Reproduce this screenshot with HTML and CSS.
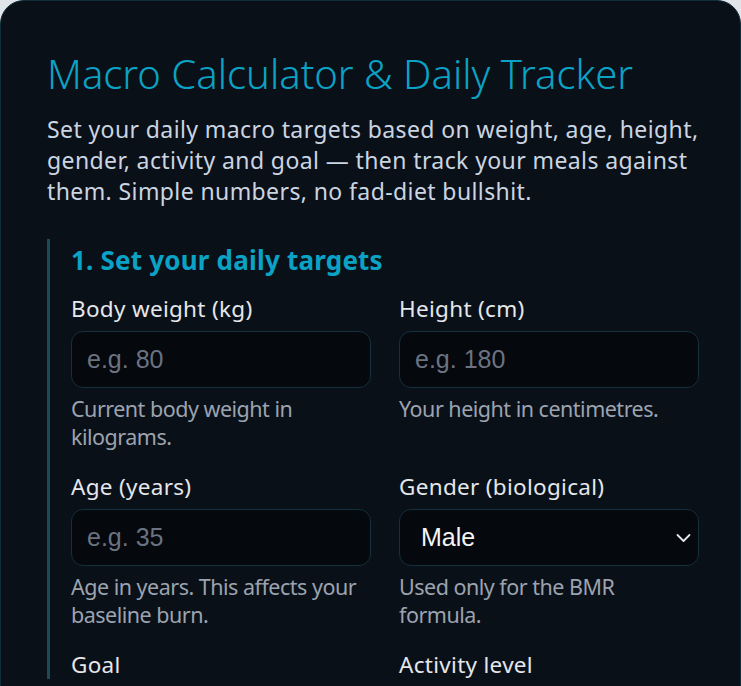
FILE: index.html
```html
<!DOCTYPE html>
<html lang="en">
<head>
<meta charset="utf-8">
<title>Macro Calculator &amp; Daily Tracker</title>
<link rel="stylesheet" href="styles.css">
</head>
<body>
<main class="card">
  <h1 class="title">Macro Calculator &amp; Daily Tracker</h1>
  <p class="intro">Set your daily macro targets based on weight, age, height, gender, activity and goal — then track your meals against them. Simple numbers, no fad-diet bullshit.</p>
  <section class="section">
    <h2 class="section-title">1. Set your daily targets</h2>
    <div class="grid">
      <div class="field">
        <label class="label" for="w">Body weight (kg)</label>
        <input class="input" id="w" type="text" placeholder="e.g. 80">
        <p class="help">Current body weight in kilograms.</p>
      </div>
      <div class="field">
        <label class="label" for="h">Height (cm)</label>
        <input class="input" id="h" type="text" placeholder="e.g. 180">
        <p class="help">Your height in centimetres.</p>
      </div>
      <div class="field">
        <label class="label" for="a">Age (years)</label>
        <input class="input" id="a" type="text" placeholder="e.g. 35">
        <p class="help">Age in years. This affects your baseline burn.</p>
      </div>
      <div class="field">
        <label class="label" for="g">Gender (biological)</label>
        <div class="select">
          <span class="select-value">Male</span>
          <svg class="chevron" width="15" height="10" viewBox="0 0 15 10"><path d="M1.5 2 L7.5 8 L13.5 2" fill="none" stroke="#e5e7eb" stroke-width="1.8" stroke-linecap="round" stroke-linejoin="round"/></svg>
        </div>
        <p class="help">Used only for the BMR formula.</p>
      </div>
      <div class="field">
        <label class="label">Goal</label>
      </div>
      <div class="field">
        <label class="label">Activity level</label>
      </div>
    </div>
  </section>
</main>
</body>
</html>
```
FILE: styles.css
```css
html, body {
  margin: 0;
  padding: 0;
}
body {
  background: #e1e5e9;
  font-family: "Noto Sans", "Open Sans", sans-serif;
  overflow: hidden;
  height: 686px;
}
.card {
  box-sizing: border-box;
  width: 741px;
  min-height: 760px;
  background: #0a1018;
  border: 1px solid #0f2e3a;
  border-radius: 24px 24px 0 0;
  padding: 49px 28px 0 46px;
}
.title {
  margin: 0;
  font-size: 40px;
  font-weight: 300;
  line-height: 48px;
  color: #0aa3c6;
  letter-spacing: 0;
}
.intro {
  margin: 16px 0 0;
  font-size: 23px;
  line-height: 31px;
  color: #cbd5e1;
  letter-spacing: 0.4px;
}
.section {
  margin-top: 32px;
  border-left: 3px solid #1a4b57;
  padding: 5px 0 0 21px;
}
.section-title {
  margin: 0 0 19px;
  font-size: 26px;
  font-weight: 700;
  line-height: 32px;
  color: #0aa3c6;
  letter-spacing: 0.2px;
}
.grid {
  display: grid;
  grid-template-columns: 300px 300px;
  column-gap: 28px;
  row-gap: 22px;
}
.field {
  display: flex;
  flex-direction: column;
}
.label {
  font-size: 22.5px;
  line-height: 28px;
  color: #e5e7eb;
  letter-spacing: 0.3px;
}
.input, .select {
  box-sizing: border-box;
  margin-top: 8px;
  height: 57px;
  width: 100%;
  background: #05080d;
  border: 1px solid #13303c;
  border-radius: 12px;
  padding: 0 15px;
  font-family: "Liberation Sans", Arial, sans-serif;
  font-size: 25px;
  color: #f3f4f6;
  outline: none;
}
.input::placeholder {
  color: #6b7280;
}
.select {
  display: flex;
  align-items: center;
  justify-content: space-between;
  padding: 0 7px 0 21px;
}
.help {
  margin: 7px 0 0;
  font-size: 21.5px;
  line-height: 28px;
  color: #9ca3af;
  letter-spacing: -0.5px;
}
```
